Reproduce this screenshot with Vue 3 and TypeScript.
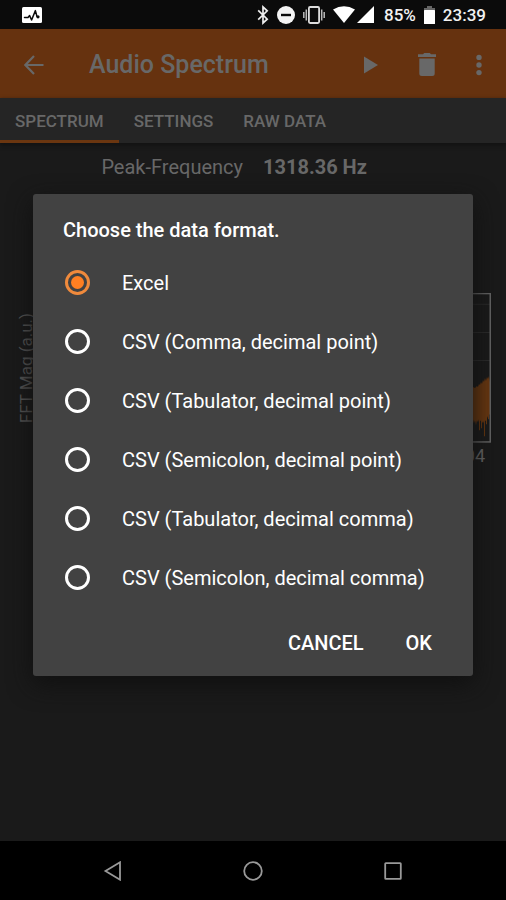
<script setup lang="ts">
import { ref } from 'vue'

interface Tab {
  id: string
  label: string
}

const tabs: Tab[] = [
  { id: 'spectrum', label: 'SPECTRUM' },
  { id: 'settings', label: 'SETTINGS' },
  { id: 'raw', label: 'RAW DATA' },
]
const activeTab = ref<string>('spectrum')

const formats: string[] = [
  'Excel',
  'CSV (Comma, decimal point)',
  'CSV (Tabulator, decimal point)',
  'CSV (Semicolon, decimal point)',
  'CSV (Tabulator, decimal comma)',
  'CSV (Semicolon, decimal comma)',
]
const selected = ref<string>('Excel')
const dialogOpen = ref<boolean>(true)
</script>

<template>
  <div class="screen">
    <header class="status">
      <svg class="app-badge" width="20" height="16" viewBox="0 0 20 16" aria-hidden="true">
        <rect width="20" height="16" rx="1.5" fill="#fff" />
        <path d="M2.5 10.5H6L7.6 8.6L9.6 13L13.4 3.6L15 9.6" fill="none" stroke="#0b0b0b" stroke-width="1.5" stroke-linejoin="round" stroke-linecap="round" />
        <circle cx="16" cy="9.8" r="1.6" fill="#0b0b0b" />
      </svg>
      <div class="system">
        <svg width="12" height="20" viewBox="0 0 12 20" aria-hidden="true">
          <path d="M1.2 5.4L10.2 14.2L6 18V2L10.2 5.8L1.2 14.6" fill="none" stroke="#eee" stroke-width="1.7" />
        </svg>
        <svg width="18" height="18" viewBox="0 0 18 18" aria-hidden="true">
          <circle cx="9" cy="9" r="9" fill="#f4f4f4" />
          <rect x="4" y="7.8" width="10" height="2.4" fill="#0b0b0b" />
        </svg>
        <svg width="22" height="18" viewBox="0 0 22 18" aria-hidden="true">
          <rect x="5.9" y="1" width="10.2" height="16" rx="1.2" fill="none" stroke="#ddd" stroke-width="1.8" />
          <path d="M3.3 3.5V14.5M18.7 3.5V14.5M.8 6V12M21.2 6V12" stroke="#bbb" stroke-width="1.5" />
        </svg>
        <div class="network">
          <svg width="22" height="17" viewBox="0 0 22 17" aria-hidden="true">
            <path d="M0 3.4Q11-3 22 3.4L11 17Z" fill="#fff" />
          </svg>
          <svg width="17" height="17" viewBox="0 0 17 17" aria-hidden="true">
            <path d="M17 0V17H0Z" fill="#fff" />
          </svg>
        </div>
        <span class="percent">85%</span>
        <svg width="11" height="18" viewBox="0 0 11 18" aria-hidden="true">
          <path d="M3 0H8V2H11V5H0V2H3Z" fill="#666" />
          <rect y="4" width="11" height="14" rx=".6" fill="#fff" />
        </svg>
        <time class="clock">23:39</time>
      </div>
    </header>

    <main class="main">
      <div class="app-bar">
        <button class="icon-button" aria-label="Back">
          <svg width="20" height="20" viewBox="0 0 20 20">
            <path d="M19.5 10H2M10 1L1.4 10L10 19" fill="none" stroke="currentColor" stroke-width="2.2" />
          </svg>
        </button>
        <h1 class="title">Audio Spectrum</h1>
        <div class="actions">
          <button class="icon-button" aria-label="Play">
            <svg width="14" height="18" viewBox="0 0 14 18"><path d="M0 .5L14 9L0 17.5Z" fill="currentColor" /></svg>
          </button>
          <button class="icon-button" aria-label="Delete">
            <svg width="18" height="23" viewBox="0 0 18 23">
              <path d="M0 1.3H5L6.2 0H11.8L13 1.3H18V4H0ZM1.3 5.4H16.7V20.5Q16.7 23 14.2 23H3.8Q1.3 23 1.3 20.5Z" fill="currentColor" />
            </svg>
          </button>
          <button class="icon-button" aria-label="More options">
            <svg width="6" height="22" viewBox="0 0 6 22" fill="currentColor">
              <circle cx="3" cy="3.4" r="2.7" />
              <circle cx="3" cy="11" r="2.7" />
              <circle cx="3" cy="18.6" r="2.7" />
            </svg>
          </button>
        </div>
      </div>

      <nav class="tabs">
        <button
          v-for="tab in tabs"
          :key="tab.id"
          class="tab"
          :class="{ active: tab.id === activeTab }"
          @click="activeTab = tab.id"
        >
          {{ tab.label }}
        </button>
      </nav>

      <section class="content">
        <div class="peak">
          <span class="peak-label">Peak-Frequency</span>
          <strong>1318.36 Hz</strong>
        </div>
        <div class="chart">
          <span class="axis-y">FFT Mag (a.u.)</span>
          <svg class="plot" viewBox="0 0 400 150" preserveAspectRatio="xMaxYMid slice" aria-hidden="true">
            <path d="M0 11.5H399M0 39.5H399M0 67.5H399" stroke="#2b2b2b" />
            <path
              d="M0 40L20 60L60 78L120 88L200 94L300 96L380 96L382 94L384 95L386 93L387 94L388 91L389 92L390 89L391 91L392 87L393 89L394 85L395 88L396 84L397 86L398 83L399 89V122L398 121V126H397V123L396 125V131H395V127L394 128V143H393V128L392 130L391 128V135H390V128L389 127V137H388V126L387 129L386 127L385 132L384 127L383 130L382 126L380 127L300 126L200 124L100 110L0 80Z"
              fill="#683710"
            />
            <rect x=".75" y=".75" width="398.5" height="148" fill="none" stroke="#626262" stroke-width="1.5" />
          </svg>
          <span class="axis-x">2e+04</span>
        </div>
      </section>

      <div v-if="dialogOpen" class="overlay">
        <form class="dialog" role="dialog" aria-labelledby="dialog-title" @submit.prevent="dialogOpen = false">
          <h2 id="dialog-title" class="dialog-title">Choose the data format.</h2>
          <label v-for="format in formats" :key="format" class="option">
            <input v-model="selected" class="radio" type="radio" name="format" :value="format" />
            <span>{{ format }}</span>
          </label>
          <div class="dialog-actions">
            <button type="button" class="text-button" @click="dialogOpen = false">CANCEL</button>
            <button type="submit" class="text-button">OK</button>
          </div>
        </form>
      </div>
    </main>

    <footer class="nav-bar">
      <button class="nav-button" aria-label="Back">
        <svg width="20" height="20" viewBox="0 0 20 20"><path d="M17 1.3V18.7L2.5 10Z" /></svg>
      </button>
      <button class="nav-button" aria-label="Home">
        <svg width="20" height="20" viewBox="0 0 20 20"><circle cx="10" cy="10" r="8.8" /></svg>
      </button>
      <button class="nav-button" aria-label="Recent apps">
        <svg width="20" height="20" viewBox="0 0 20 20"><rect x="2.2" y="2.2" width="15.6" height="15.6" rx=".6" /></svg>
      </button>
    </footer>
  </div>
</template>

<style>
body {
  background: #000;
}
</style>

<style scoped>
.screen {
  display: flex;
  flex-direction: column;
  min-height: 100vh;
  background: #1a1a1a;
  color: #686868;
  font-family: Roboto, "Noto Sans", sans-serif;
}

button {
  padding: 0;
  border: 0;
  background: none;
  color: inherit;
  font: inherit;
  cursor: pointer;
}

svg {
  display: block;
}

.status {
  display: flex;
  align-items: center;
  justify-content: space-between;
  height: 29px;
  padding: 0 20px 0 22px;
  background: #0b0b0b;
  color: #f2f2f2;
  font-size: 17px;
  font-weight: 500;
}

.system {
  display: flex;
  align-items: center;
  gap: 8px;
}

.network {
  display: flex;
  gap: 2px;
  padding-right: 2px;
}

.clock {
  line-height: 20px;
}

.main {
  position: relative;
  display: flex;
  flex: 1;
  flex-direction: column;
}

.app-bar {
  display: flex;
  align-items: center;
  box-sizing: border-box;
  height: 69px;
  padding: 2px 24px 0;
  background: #66320f;
}

.title {
  flex: 1;
  margin: 0 0 0 45px;
  font-size: 25px;
  font-weight: 500;
}

.actions {
  display: flex;
  align-items: center;
  gap: 40px;
}

.tabs {
  display: flex;
  height: 45px;
  background: #252525;
  box-shadow: 0 2px 4px #111;
}

.tab {
  padding: 3px 15px 0;
  border-bottom: 3px solid transparent;
  font-size: 17px;
  font-weight: 500;
}

.tab.active {
  border-color: #6b3610;
}

.content {
  flex: 1;
}

.peak {
  display: grid;
  grid-template-columns: 1fr 1fr;
  gap: 20px;
  margin-top: 12px;
  font-size: 20px;
  line-height: 24px;
}

.peak-label {
  text-align: right;
}

.chart {
  display: grid;
  grid-template-columns: 20px 1fr;
  column-gap: 54px;
  margin-top: 114px;
  padding: 0 15px 0 16px;
  font-size: 17px;
  line-height: 20px;
}

.axis-y {
  align-self: center;
  justify-self: center;
  color: #545454;
  writing-mode: vertical-rl;
  transform: rotate(180deg);
}

.plot {
  width: 100%;
  height: 150px;
}

.axis-x {
  grid-column: 2;
  margin: 3px 6px 0 0;
  font-size: 18px;
  text-align: right;
}

.overlay {
  position: absolute;
  inset: 0;
  display: grid;
  align-items: center;
  padding: 0 33px;
}

.dialog {
  padding: 21px 30px 11px;
  border-radius: 3px;
  background: #424242;
  box-shadow: 0 8px 24px #101010;
  color: #fff;
  font-size: 20px;
}

.dialog-title {
  margin: 0 0 8px;
  font-size: 20px;
  font-weight: 500;
  line-height: 30px;
}

.option {
  display: flex;
  align-items: center;
  gap: 32px;
  height: 59px;
  padding-left: 2px;
  cursor: pointer;
}

.radio {
  display: grid;
  flex: none;
  place-items: center;
  width: 25px;
  height: 25px;
  margin: 0;
  border: 3px solid #fff;
  border-radius: 50%;
  appearance: none;
}

.radio:checked {
  border-color: #f08a3c;
}

.radio:checked::before {
  width: 13px;
  height: 13px;
  border-radius: 50%;
  background: #ff7f22;
  content: "";
}

.dialog-actions {
  display: flex;
  justify-content: flex-end;
  gap: 20px;
  margin-top: 13px;
}

.text-button {
  height: 45px;
  padding: 0 11px;
  font-weight: 500;
}

.nav-bar {
  display: flex;
  justify-content: center;
  height: 59px;
  background: #000;
}

.nav-button {
  display: grid;
  place-items: center;
  width: 140px;
}

.nav-button svg {
  fill: none;
  stroke: #999;
  stroke-width: 1.8;
}
</style>
